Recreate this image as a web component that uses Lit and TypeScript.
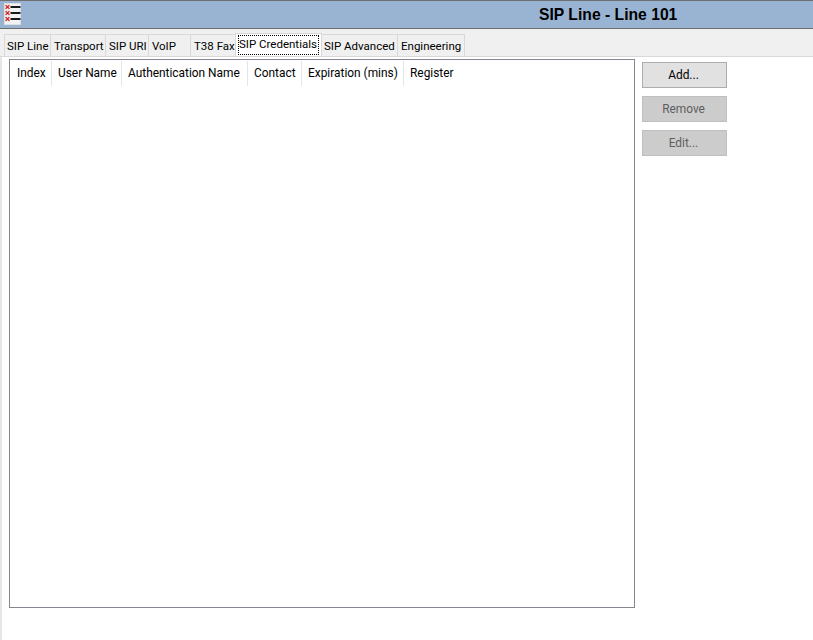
import { LitElement, html, css, svg } from "lit";
import { customElement } from "lit/decorators.js";

const tabs: [string, number, boolean?][] = [
  ["SIP Line", 47],
  ["Transport", 55],
  ["SIP URI", 43],
  ["VoIP", 42],
  ["T38 Fax", 45],
  ["SIP Credentials", 87, true],
  ["SIP Advanced", 77],
  ["Engineering", 67],
];
const cols: [string, number][] = [
  ["Index", 42],
  ["User Name", 70],
  ["Authentication Name", 126],
  ["Contact", 54],
  ["Expiration (mins)", 102],
  ["Register", 60],
];

@customElement("app-root")
export class AppRoot extends LitElement {
  static styles = css`
    :host {
      display: block;
      width: 813px;
      height: 640px;
      overflow: hidden;
      background: #fff;
      font-family: Roboto, "Open Sans", sans-serif;
      font-size: 11.9px;
      color: #000;
    }
    .title {
      box-sizing: border-box;
      height: 29px;
      background: #98b4d2;
      border-top: 1px solid #6e6e6e;
      border-bottom: 1px solid #6e6e6e;
      display: flex;
      align-items: center;
      padding-left: 4px;
    }
    .icon {
      width: 17px;
      height: 22px;
      display: block;
      flex: none;
      align-self: flex-start;
      margin-top: 2px;
    }
    .title-text {
      margin-left: 518px;
      font-family: "Liberation Sans", Arial, sans-serif;
      font-weight: 700;
      font-size: 15.7px;
      line-height: 27px;
      white-space: nowrap;
    }
    .strip {
      box-sizing: border-box;
      height: 28px;
      background: #f0f0f0;
      border-bottom: 1px solid #d9d9d9;
      padding: 5px 0 0 4px;
      display: flex;
      align-items: flex-start;
      font-size: 11.5px;
    }
    .tab {
      box-sizing: border-box;
      height: 22px;
      border: 1px solid #d9d9d9;
      border-bottom: none;
      border-left-width: 0;
      padding: 2px 0 0 3px;
      line-height: 18px;
      white-space: nowrap;
      background: #f0f0f0;
    }
    .tab:first-child {
      border-left-width: 1px;
      padding-left: 2px;
    }
    .tab.active {
      height: 23px;
      margin: -1px -1px 0 -1px;
      background: #fff;
      border: 1px solid #d9d9d9;
      border-bottom: none;
      padding: 1px 2px 0 2px;
      position: relative;
    }
    .focus {
      display: block;
      height: 20px;
      line-height: 19px;
      box-sizing: border-box;
      outline: 1px dotted #000;
      outline-offset: -1px;
      padding-left: 1px;
    }
    .body {
      height: 583px;
      padding: 2px 0 0 0;
      display: flex;
      border-left: 2px solid #e6e6e6;
      box-sizing: border-box;
    }
    .list {
      box-sizing: border-box;
      margin-left: 7px;
      width: 626px;
      height: 549px;
      border: 1px solid #828790;
      background: #fff;
      flex: none;
    }
    .head {
      display: flex;
      height: 27px;
      box-sizing: border-box;
    }
    .col {
      box-sizing: border-box;
      height: 25px;
      margin-top: 1px;
      padding-left: 6px;
      padding-top: 3px;
      line-height: 18px;
      border-right: 1px solid #e5e5e5;
      white-space: nowrap;
    }
    .col:first-child {
      padding-left: 7px;
    }
    .col:last-child {
      border-right: none;
    }
    .buttons {
      margin-left: 7px;
      padding-top: 3px;
      display: flex;
      flex-direction: column;
      gap: 8px;
    }
    .btn {
      box-sizing: border-box;
      width: 85px;
      height: 26px;
      border: 1px solid #adadad;
      background: #e1e1e1;
      font: inherit;
      color: #000;
      padding: 0 2px 0 0;
      text-align: center;
      line-height: 22px;
    }
    .btn:disabled {
      background: #cccccc;
      border-color: #bfbfbf;
      color: #5f5f5f;
    }
  `;

  private icon() {
    const rows = [4, 10, 16];
    return html`<svg class="icon" viewBox="0 0 17 22">
      <rect x="0.25" y="0.25" width="16.5" height="21.5" fill="#f2f2f2" stroke="#dcdcdc" stroke-width="0.5" />
      ${rows.map(
        (y) => svg`
          <rect x="1" y=${y - 2.5} width="5" height="5" fill="#f6dcdc" />
          <path d="M1.6 ${y - 1.9}l3.8 3.8M5.4 ${y - 1.9}l-3.8 3.8" stroke="#cc1f1f" stroke-width="1.2" fill="none" />
          <rect x="6.5" y=${y - 1} width="10" height="2" fill="#1a1a1a" />
        `
      )}
    </svg>`;
  }

  render() {
    return html`
      <div class="title">
        ${this.icon()}
        <span class="title-text">SIP Line - Line 101</span>
      </div>
      <div class="strip">
        ${tabs.map(([t, w, active]) =>
          active
            ? html`<div class="tab active" style="width:${w}px"><span class="focus">${t}</span></div>`
            : html`<div class="tab" style="width:${w}px">${t}</div>`
        )}
      </div>
      <div class="body">
        <div class="list">
          <div class="head">
            ${cols.map(([t, w]) => html`<div class="col" style="width:${w}px">${t}</div>`)}
          </div>
        </div>
        <div class="buttons">
          <button class="btn">Add...</button>
          <button class="btn" disabled>Remove</button>
          <button class="btn" disabled>Edit...</button>
        </div>
      </div>
    `;
  }
}
